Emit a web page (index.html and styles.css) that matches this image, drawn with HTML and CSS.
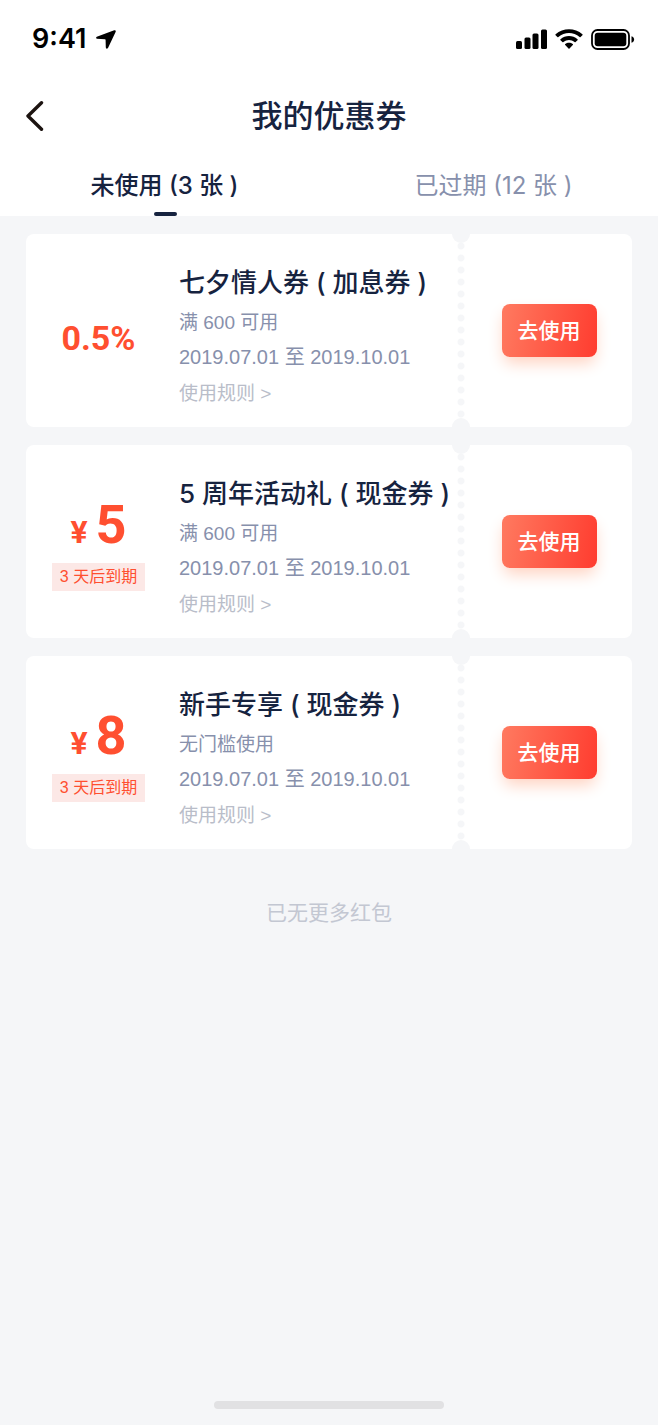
FILE: index.html
```html
<!DOCTYPE html>
<html lang="zh-CN">
<head>
<meta charset="utf-8">
<meta name="viewport" content="width=device-width, initial-scale=1">
<title>我的优惠券</title>
<link rel="stylesheet" href="styles.css">
</head>
<body>
<header class="header">
  <div class="status-bar">
    <div class="status-left">
      <span class="clock">9:41</span>
      <svg class="icon" width="20" height="19" viewBox="0 0 20 19" aria-hidden="true"><path d="M18.200.2.8 6.800Q-.6 7.900.8 8.700L9 9.200Q9.600 9.300 9.600 10L9.800 17.500Q10.500 19.800 12 18L19.700 1.700Q20.100-.2 18.200.2Z"/></svg>
    </div>
    <div class="status-right">
      <svg class="icon" width="31" height="20" viewBox="0 0 31 20" aria-hidden="true"><rect x="0" y="12" width="6" height="8" rx="1.500"/><rect x="8.500" y="8.500" width="6" height="11.500" rx="1.500"/><rect x="16.500" y="4.500" width="6" height="15.500" rx="1.500"/><rect x="25" y="0.500" width="6" height="19.500" rx="1.500"/></svg>
      <svg class="icon" width="28" height="20" viewBox="0 0 28 20" aria-hidden="true"><path d="M.6 5.300C8-1.500 20-1.500 27.400 5.300Q27.900 5.800 27.400 6.300L25.600 8.100Q25.100 8.500 24.600 8.100C18.500 2.700 9.500 2.700 3.400 8.100Q2.900 8.500 2.400 8.100L.6 6.300Q.1 5.800.6 5.300ZM5.500 10.200C10.200 6 17.800 6 22.500 10.200Q23 10.700 22.500 11.200L20.600 13Q20.100 13.400 19.600 13C16.400 10.200 11.600 10.200 8.400 13Q7.900 13.400 7.400 13L5.500 11.200Q5 10.700 5.500 10.200ZM10.200 15.100C12.300 13.300 15.700 13.300 17.800 15.100Q18.300 15.600 17.800 16.100L14.500 19.400Q14 19.900 13.500 19.400L10.200 16.100Q9.700 15.600 10.200 15.100Z"/></svg>
      <svg class="icon" width="44" height="21" viewBox="0 0 44 21" aria-hidden="true"><rect x="1" y="1" width="37" height="19" rx="5.500" fill="none" stroke="#000" stroke-width="1.800"/><rect x="3.700" y="3.700" width="31.600" height="13.600" rx="3"/><path d="M40.500 7.300C44 8 44 13 40.500 13.700Z"/></svg>
    </div>
  </div>
  <div class="nav-bar">
    <button class="back" type="button" aria-label="返回"><svg width="18" height="30" viewBox="0 0 18 30" aria-hidden="true"><path d="M15.500 1.800 2 15 15.500 28.200" fill="none" stroke="#1c1310" stroke-width="3.400" stroke-linecap="round" stroke-linejoin="round"/></svg></button>
    <h1 class="page-title">我的优惠券</h1>
  </div>
  <nav class="tabs">
    <a class="tab tab-active" href="#unused" aria-current="page">未使用 (3 张 )</a>
    <a class="tab" href="#expired">已过期 (12 张 )</a>
  </nav>
</header>
<main class="coupons" id="unused">
  <article class="coupon">
    <div class="value"><p class="amount amount-rate">0.5%</p></div>
    <div class="info">
      <h2 class="coupon-title">七夕情人券 ( 加息券 )</h2>
      <p class="condition">满 600 可用</p>
      <p class="period">2019.07.01 至 2019.10.01</p>
      <a class="rules" href="#rules">使用规则 &gt;</a>
    </div>
    <div class="perforation"></div>
    <div class="stub"><button class="use" type="button">去使用</button></div>
  </article>
  <article class="coupon">
    <div class="value"><p class="amount"><span class="currency">¥</span>5</p><p class="expiry">3 天后到期</p></div>
    <div class="info">
      <h2 class="coupon-title">5 周年活动礼 ( 现金券 )</h2>
      <p class="condition">满 600 可用</p>
      <p class="period">2019.07.01 至 2019.10.01</p>
      <a class="rules" href="#rules">使用规则 &gt;</a>
    </div>
    <div class="perforation"></div>
    <div class="stub"><button class="use" type="button">去使用</button></div>
  </article>
  <article class="coupon">
    <div class="value"><p class="amount"><span class="currency">¥</span>8</p><p class="expiry">3 天后到期</p></div>
    <div class="info">
      <h2 class="coupon-title">新手专享 ( 现金券 )</h2>
      <p class="condition">无门槛使用</p>
      <p class="period">2019.07.01 至 2019.10.01</p>
      <a class="rules" href="#rules">使用规则 &gt;</a>
    </div>
    <div class="perforation"></div>
    <div class="stub"><button class="use" type="button">去使用</button></div>
  </article>
  <p class="list-end">已无更多红包</p>
</main>
<footer class="home-area"><div class="home-indicator"></div></footer>
</body>
</html>
```
FILE: styles.css
```css
* { box-sizing: border-box; margin: 0; padding: 0; }

body {
  display: flex;
  flex-direction: column;
  min-height: 100vh;
  background: #f5f6f8;
  color: #16233f;
  font-family: "Liberation Sans", "Noto Sans CJK SC", sans-serif;
}

button { border: 0; background: none; font: inherit; cursor: pointer; }
a { color: inherit; text-decoration: none; }
svg { display: block; }

.header { background: #fff; }

.status-bar {
  display: flex;
  justify-content: space-between;
  align-items: center;
  height: 78px;
  padding: 0 23px 0 32px;
}
.status-left, .status-right { display: flex; align-items: center; }
.status-left { gap: 10px; }
.status-right { gap: 8px; }
.icon { fill: #000; }
.clock { color: #000; font: 600 27px/32px Inter, sans-serif; }

.nav-bar {
  display: grid;
  grid-template-columns: 1fr auto 1fr;
  align-items: center;
  height: 76px;
  padding: 0 26px;
}
.back { justify-self: start; }
.page-title { padding-top: 2px; font-size: 31px; line-height: 48px; font-weight: 500; }

.tabs { display: grid; grid-template-columns: 1fr 1fr; }
.tab {
  position: relative;
  height: 62px;
  color: #8790ac;
  font: 400 24px/64px Inter, "Noto Sans CJK SC", sans-serif;
  text-align: center;
}
.tab-active { color: #16233f; font-weight: 500; }
.tab-active::after {
  content: "";
  position: absolute;
  bottom: 0;
  left: 50%;
  width: 23px;
  height: 4px;
  margin-left: -11px;
  border-radius: 2px;
  background: #16233f;
}

.coupons {
  flex: 1;
  display: flex;
  flex-direction: column;
  gap: 18px;
  padding: 18px 26px;
}
.coupon {
  display: grid;
  grid-template-columns: 153px 1fr 10px 166px;
  min-height: 193px;
  overflow: hidden;
  border-radius: 8px;
  background: #fff;
}

.value {
  display: flex;
  flex-direction: column;
  align-items: center;
  justify-content: center;
  gap: 6px;
  padding: 8px 8px 0 0;
  color: #ff4f30;
}
.amount {
  display: flex;
  align-items: baseline;
  gap: 8px;
  font: 700 54px/50px Roboto, sans-serif;
}
.amount-rate { padding-top: 6px; font-size: 34px; }
.currency { font-size: 32px; }
.expiry {
  padding: 0 8px;
  background: #fce8e6;
  font-size: 16px;
  line-height: 28px;
}

.info { padding-top: 29px; white-space: nowrap; }
.coupon-title { font: 500 26px/40px Inter, "Noto Sans CJK SC", sans-serif; }
.condition, .period { color: #8790ac; font-size: 19px; }
.condition { line-height: 40px; }
.period { font-size: 20px; line-height: 28px; }
.rules { display: block; color: #b9bdc9; font-size: 19px; line-height: 46px; }

.perforation {
  position: relative;
  background: radial-gradient(circle, #f5f6f8 3px, transparent 4px) center 6px / 10px 12px repeat-y;
}
.perforation::before, .perforation::after {
  content: "";
  position: absolute;
  left: -4px;
  width: 18px;
  height: 18px;
  border-radius: 50%;
  background: #f5f6f8;
}
.perforation::before { top: -9px; }
.perforation::after { bottom: -9px; }

.stub { display: flex; align-items: center; justify-content: center; }
.use {
  padding: 0 16px;
  border-radius: 8px;
  background: linear-gradient(100deg, #ff7a60, #ff3c2f);
  box-shadow: 0 8px 16px -2px #ffd2c0;
  color: #fff;
  font-size: 21px;
  font-weight: 500;
  line-height: 53px;
}

.list-end {
  padding-top: 30px;
  color: #c3c7d2;
  font-size: 21px;
  line-height: 32px;
  text-align: center;
}

.home-area { display: flex; justify-content: center; padding-bottom: 16px; }
.home-indicator { width: 35%; height: 8px; border-radius: 4px; background: #e1e1e3; }
```
